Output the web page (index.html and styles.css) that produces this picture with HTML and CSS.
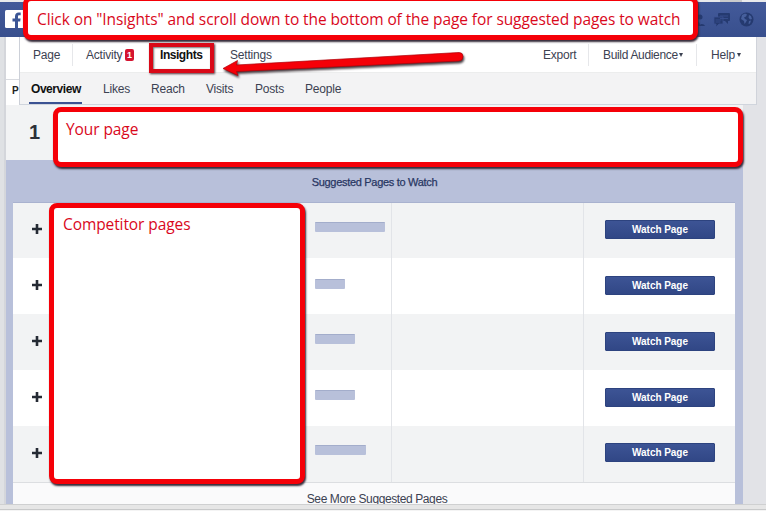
FILE: index.html
```html
<!DOCTYPE html>
<html lang="en">
<head>
<meta charset="utf-8">
<title>Page Insights</title>
<link rel="stylesheet" href="styles.css">
</head>
<body>
<div class="window">
  <div class="chrome-top"></div>
  <header class="topbar">
    <svg class="logo" width="20" height="18" viewBox="0 0 20 18"><rect width="20" height="18" rx="1.5" fill="#fff"/><path d="M10 18v-6.500H7.500V8.500H10V6.500C10 3.800 11.500 2.500 13.700 2.500h2v2.800h-1.400c-1 0-1.300.5-1.300 1.400v1.800h2.600l-.4 3H13V18z" fill="#3b5595"/></svg>
    <div class="icons">
      <svg width="16" height="16" viewBox="0 0 16 16"><g fill="#253a70"><circle cx="6" cy="5" r="3"/><path d="M1 14c0-4 2-5 5-5s5 1 5 5z"/><circle cx="11" cy="5" r="2.500"/><path d="M10 14c2-3 5-2 6 0z"/></g></svg>
      <svg width="18" height="16" viewBox="0 0 18 16"><path d="M6 1h10q1 0 1 1v6q0 1-1 1h-1v3l-3-3H6q-1 0-1-1V2q0-1 1-1z" fill="#253a70"/><path d="M1 5h9v7H6l-3 3v-3H1z" fill="#253a70" stroke="#3b5292" stroke-width=".8"/><path d="M7 4h8M7 6.500h8M2.500 8h6M2.500 10h5" stroke="#3b5292" stroke-width=".8"/></svg>
      <svg width="15" height="15" viewBox="0 0 15 15"><circle cx="7.500" cy="7.500" r="7" fill="#253a70"/><path d="M3 3l3-1.500 2 1-1 2-2 1 1 1.500 2 1-1 2-1.500 2L5 9 2 7zM10 3l2 1 1 3-2 .500-1.500-2zM10 9l2-.500-1 3-1.500.500z" fill="#465f9c"/></svg>
    </div>
  </header>
  <main class="stage">
    <div class="nav-row">
      <div class="stub"><div class="stub-top"></div><div class="stub-bottom">P</div></div>
      <div class="nav">
        <nav class="tabs">
          <span class="t-page">Page</span><i class="sep"></i>
          <span class="t-activity">Activity</span><b class="badge">1</b>
          <span class="t-insights">Insights</span>
          <span class="t-settings">Settings</span>
          <span class="t-export">Export</span><i class="sep"></i>
          <span class="t-build">Build Audience</span><i class="caret"></i><i class="sep sep-help"></i>
          <span class="t-help">Help</span><i class="caret"></i>
        </nav>
        <nav class="subtabs">
          <span class="active">Overview</span><span>Likes</span><span>Reach</span><span>Visits</span><span>Posts</span><span>People</span>
        </nav>
      </div>
    </div>
    <div class="content">
      <div class="own-page">1</div>
      <h2>Suggested Pages to Watch</h2>
      <section class="table">
        <div class="row"><svg class="plus" viewBox="0 0 10 10"><path d="M5 0v10M0 5h10"/></svg><div class="meter"><i class="bar w69"></i></div><div class="mid"></div><div class="act"><button>Watch Page</button></div></div>
        <div class="row"><svg class="plus" viewBox="0 0 10 10"><path d="M5 0v10M0 5h10"/></svg><div class="meter"><i class="bar w30"></i></div><div class="mid"></div><div class="act"><button>Watch Page</button></div></div>
        <div class="row"><svg class="plus" viewBox="0 0 10 10"><path d="M5 0v10M0 5h10"/></svg><div class="meter"><i class="bar w40"></i></div><div class="mid"></div><div class="act"><button>Watch Page</button></div></div>
        <div class="row"><svg class="plus" viewBox="0 0 10 10"><path d="M5 0v10M0 5h10"/></svg><div class="meter"><i class="bar w40"></i></div><div class="mid"></div><div class="act"><button>Watch Page</button></div></div>
        <div class="row"><svg class="plus" viewBox="0 0 10 10"><path d="M5 0v10M0 5h10"/></svg><div class="meter"><i class="bar w51"></i></div><div class="mid"></div><div class="act"><button>Watch Page</button></div></div>
        <div class="more">See More Suggested Pages</div>
      </section>
    </div>
  </main>
  <footer class="chrome-bottom"></footer>

  <div class="callout c-top">Click on "Insights" and scroll down to the bottom of the page for suggested pages to watch</div>
  <div class="callout c-own">Your page</div>
  <div class="callout c-comp">Competitor pages</div>
  <div class="highlight"></div>
  <svg class="arrow" width="250" height="36" viewBox="0 0 250 36"><path d="M5 22.500L19.500 14.500L18.500 19L241 6.500Q245 6.500 245 10.500Q245 14.500 241 15L18.500 25.500L20 29.500Z" fill="#f50008" stroke="#b0000a" stroke-width=".7" stroke-linejoin="round"/></svg>
</div>
</body>
</html>
```

FILE: styles.css
```css
* { box-sizing: border-box; }
body { margin: 0; font-family: "Liberation Sans", Arial, sans-serif; font-size: 12px; color: #3c4252; }
.window { position: relative; width: 766px; height: 511px; overflow: hidden; display: flex; flex-direction: column; background: #e2e3e7; }
.chrome-top { height: 2px; background: linear-gradient(90deg, #e9eaec 720px, #c9cacc 720px 742px, #e9eaec 742px); }
.topbar { height: 35px; flex: none; background: linear-gradient(#435a9a, #384f8d); display: flex; align-items: center; justify-content: space-between; padding: 0 12px 0 5px; }
.logo { margin-top: -1px; }
.icons { display: flex; align-items: center; gap: 8px; }
.stage { height: 467px; flex: none; padding-left: 6px; overflow: hidden; background: linear-gradient(90deg, #dfe1e4 4px, #d4d6db 4px 6px, #e2e3e7 6px); }
.nav-row { display: flex; width: 751px; height: 68px; }
.stub { width: 14px; background: #fff; border-right: 1px solid #ccd0d8; }
.stub-top { height: 43px; border-bottom: 1px solid #d9dbe0; }
.stub-bottom { padding: 4px 0 0 6px; font-size: 10px; font-weight: bold; line-height: 14px; color: #222; overflow: hidden; }
.nav { flex: 1; border-right: 1px solid #d0d3da; }
.tabs { height: 35px; background: #fff; display: flex; align-items: center; white-space: nowrap; letter-spacing: -.2px; }
.tabs span { line-height: 16px; flex: none; }
.sep { width: 1px; height: 22px; background: #e6e7ea; }
.t-page { width: 38px; margin-left: 13px; margin-right: 1px; }
.t-activity { width: 35px; margin-left: 13px; }
.badge { width: 9px; height: 12px; margin-left: 4px; border-radius: 2px; background: #d51430; color: #fff; font-size: 9px; line-height: 12px; text-align: center; }
.t-insights { width: 43px; margin-left: 26px; font-weight: bold; color: #111; letter-spacing: -.45px; }
.t-settings { width: 40px; margin-left: 27px; }
.t-export { width: 32px; margin-left: 273px; margin-right: 13px; }
.t-build { width: 74px; margin-left: 14px; letter-spacing: -.33px; }
.caret { width: 0; height: 0; margin-left: 2px; border: 2.5px solid transparent; border-top: 4px solid #3c4252; border-bottom: 0; }
.sep-help { margin-left: 13px; }
.t-help { width: 24px; margin-left: 14px; }
.subtabs { height: 33px; padding-left: 9px; display: flex; gap: 22px; background: #f3f3f4; border-top: 1px solid #eceded; border-bottom: 1px solid #d0d5dd; line-height: 32px; letter-spacing: -.2px; }
.subtabs span + span { flex: none; }
.subtabs span:nth-child(2) { width: 26px; }
.subtabs span:nth-child(3) { width: 33px; }
.subtabs span:nth-child(4) { width: 27px; }
.subtabs span:nth-child(5) { width: 28px; }
.subtabs .active { width: 53px; padding-left: 2px; margin-right: -1px; font-weight: bold; color: #111; border-bottom: 2px solid #3b5292; letter-spacing: -.45px; }
.content { width: 737px; background: #b8c0da; }
.own-page { height: 55px; background: #f2f3f4; padding: 16px 0 0 23px; font-size: 20px; line-height: 22px; font-weight: bold; color: #2c3038; }
h2 { margin: 0; height: 42px; padding-top: 15px; font-size: 11px; line-height: 15px; font-weight: normal; color: #283763; text-align: center; letter-spacing: -.3px; -webkit-text-stroke: .25px #283763; }
.table { margin: 0 8px 0 7px; height: 302px; border-top: 1px solid #a9b2cf; background: #fff; }
.row { height: 56px; display: grid; grid-template-columns: 294px 85px 192px 151px; background: #fff; }
.row:nth-child(odd) { background: #f2f3f4; }
.row:first-child { height: 55px; }
.plus { width: 10px; height: 10px; margin: 21px 0 0 19px; stroke: #252a34; stroke-width: 2.6; }
.meter { padding: 19px 0 0 8px; border-right: 1px solid #e2e4e8; }
.row:nth-child(n+2) .meter { padding-top: 21px; }
.row:nth-child(3) .meter, .row:nth-child(4) .meter { padding-top: 20px; }
.row:nth-child(5) .meter { padding-top: 19px; }
.bar { display: block; height: 10px; background: #b8c0da; border-top: 1px solid #a3adcb; border-radius: 1px; }
.w69 { width: 70px; } .w30 { width: 30px; } .w40 { width: 40px; } .w51 { width: 51px; }
.mid { border-right: 1px solid #e2e4e8; }
.act { padding: 17px 0 0 21px; }
.row:nth-child(n+2) .plus { margin-top: 22px; }
.row:nth-child(2) .act, .row:nth-child(3) .act, .row:nth-child(4) .act { padding-top: 18px; }
button { display: block; width: 110px; height: 19px; padding: 0; border: 1px solid #2d437f; border-radius: 1px; background: linear-gradient(#3d5495, #314786); color: #fff; font: bold 10px/17px "Liberation Sans", Arial, sans-serif; letter-spacing: -.05px; }
.more { height: 22px; border-top: 1px solid #dcdee1; background: #fafafb; padding-top: 8px; padding-left: 6px; font-size: 12px; line-height: 16px; letter-spacing: -.4px; text-align: center; }
.chrome-bottom { position: relative; height: 7px; flex: none; border-top: 1px solid #cfd0d1; border-bottom: 1px solid #f4f4f4; background: linear-gradient(#e6e6e6 4px, #c8c9ca 4px 5px, #f6f6f6 5px); }
.callout { position: absolute; border: 5px solid #f50008; border-radius: 8px; background: #fff; color: #d9081c; font: 15.5px/20px "Open Sans", "Noto Sans", sans-serif; letter-spacing: -.09px; white-space: nowrap; box-shadow: 1px 2px 2px #342a38; }
.c-top { left: 23px; top: -4px; width: 675px; height: 44px; padding: 8px 0 0 9px; }
.c-own { left: 53px; top: 107px; width: 690px; height: 60px; padding: 7px 0 0 8px; }
.c-comp { left: 49px; top: 203px; width: 256px; height: 281px; padding: 6px 0 0 9px; }
.highlight { position: absolute; left: 149px; top: 43px; width: 65px; height: 30px; border: 4px solid #d90918; box-shadow: 1px 1px 2px #55333a, inset 1px 1px 2px #777; }
.arrow { position: absolute; left: 218px; top: 46px; filter: drop-shadow(1px 2px 1px #443a40); }
```
